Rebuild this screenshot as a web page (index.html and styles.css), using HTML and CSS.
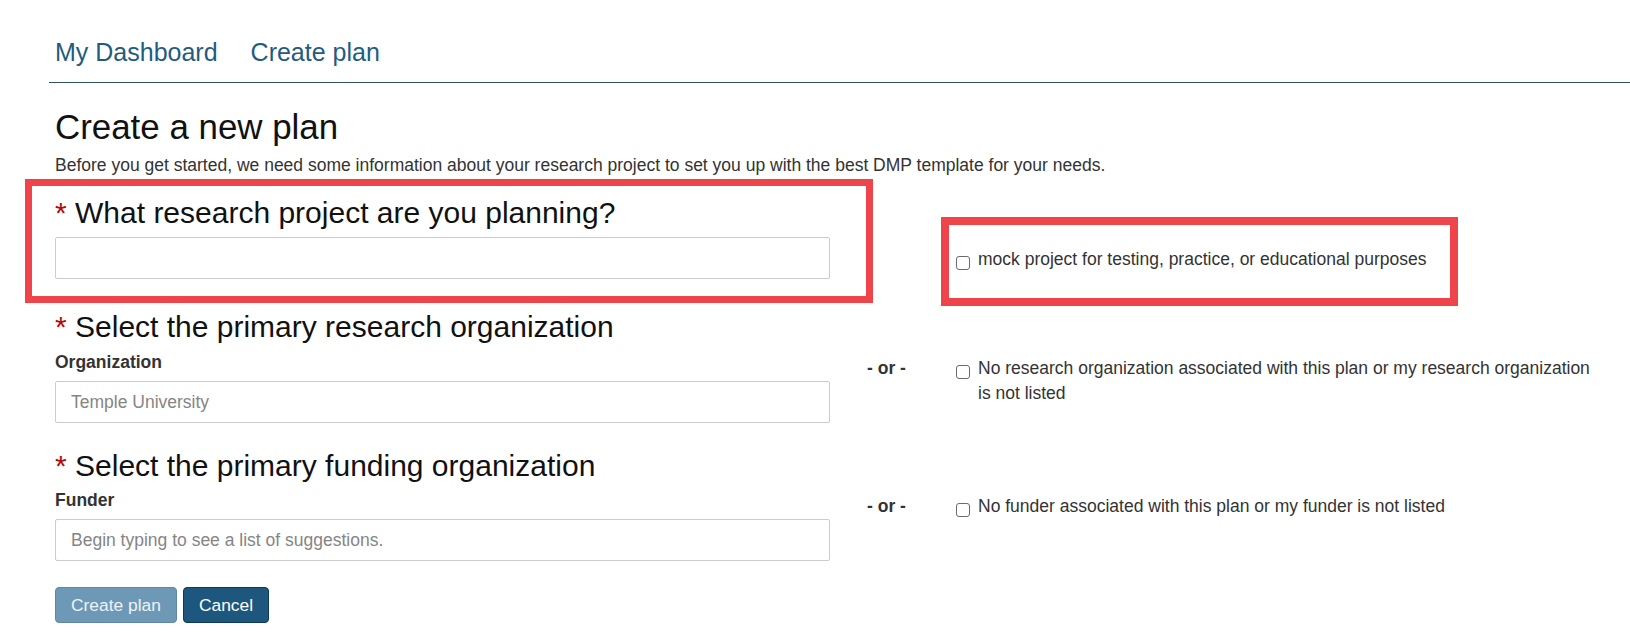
FILE: index.html
```html
<!DOCTYPE html>
<html lang="en">
<head>
<meta charset="utf-8">
<title>Create a new plan</title>
<link rel="stylesheet" href="styles.css">
</head>
<body>
<nav class="topnav">
  <a class="topnav-link" href="#">My Dashboard</a>
  <a class="topnav-link" href="#">Create plan</a>
</nav>
<main class="page">
  <h1 class="page-title">Create a new plan</h1>
  <p class="intro">Before you get started, we need some information about your research project to set you up with the best DMP template for your needs.</p>
  <form class="plan-form">
    <div class="row row-project">
      <div class="col-main">
        <h2 class="question"><span class="req">*</span> What research project are you planning?</h2>
        <input class="field" type="text">
      </div>
      <div class="col-or"></div>
      <label class="col-check check-mock"><input class="box" type="checkbox"><span>mock project for testing, practice, or educational purposes</span></label>
    </div>
    <div class="row row-org">
      <div class="col-main">
        <h2 class="question"><span class="req">*</span> Select the primary research organization</h2>
        <div class="field-label">Organization</div>
        <input class="field" type="text" placeholder="Temple University">
      </div>
      <div class="col-or">- or -</div>
      <label class="col-check"><input class="box" type="checkbox"><span>No research organization associated with this plan or my research organization is not listed</span></label>
    </div>
    <div class="row row-funder">
      <div class="col-main">
        <h2 class="question"><span class="req">*</span> Select the primary funding organization</h2>
        <div class="field-label">Funder</div>
        <input class="field" type="text" placeholder="Begin typing to see a list of suggestions.">
      </div>
      <div class="col-or">- or -</div>
      <label class="col-check"><input class="box" type="checkbox"><span>No funder associated with this plan or my funder is not listed</span></label>
    </div>
    <div class="actions">
      <button class="btn btn-create" type="button">Create plan</button>
      <button class="btn btn-cancel" type="button">Cancel</button>
    </div>
  </form>
</main>
<div class="annot annot-project"></div>
<div class="annot annot-mock"></div>
</body>
</html>
```

FILE: styles.css
```css
html, body {
  margin: 0;
  padding: 0;
  background: #ffffff;
}
body {
  position: relative;
  font-family: "Liberation Sans", Arial, sans-serif;
  color: #333333;
  width: 1630px;
  height: 641px;
  overflow: hidden;
}

.topnav {
  display: flex;
  gap: 33px;
  margin-left: 49px;
  padding: 37px 0 15px 6px;
  border-bottom: 1px solid #2e5566;
}
.topnav-link {
  font-size: 25px;
  line-height: 30px;
  color: #1f5c80;
  text-decoration: none;
}

.page {
  padding: 0 30px 0 55px;
}
.page-title {
  margin: 26px 0 0;
  font-size: 34.9px;
  line-height: 36px;
  font-weight: normal;
  color: #111111;
}
.intro {
  margin: 10px 0 0;
  font-size: 17.5px;
  line-height: 20px;
  color: #333333;
}

.row {
  display: grid;
  grid-template-columns: 775px 126px 644px;
}
.row-project { margin-top: 22px; }
.row-org { margin-top: 32px; }
.row-funder { margin-top: 27px; }

.question {
  margin: 0;
  font-size: 30px;
  line-height: 32px;
  font-weight: normal;
  color: #111111;
}
.req {
  color: #b00c0c;
}
.field-label {
  margin-top: 7px;
  font-size: 17.5px;
  line-height: 22px;
  font-weight: bold;
  color: #333333;
}
.row-org .field-label { margin-top: 8px; }
.field {
  display: block;
  box-sizing: border-box;
  width: 775px;
  height: 42px;
  margin: 8px 0 0;
  padding: 0 15px;
  border: 1px solid #cccccc;
  border-radius: 2px;
  font-family: "Liberation Sans", Arial, sans-serif;
  font-size: 17.5px;
  color: #333333;
  background: #ffffff;
}
.field::placeholder {
  color: #858585;
}

.col-or {
  padding: 45px 0 0 37px;
  font-size: 17.5px;
  line-height: 24.5px;
  font-weight: bold;
  color: #333333;
}
.row-funder .col-or { padding-top: 44px; }

.col-check {
  display: flex;
  align-items: flex-start;
  gap: 8px;
  padding-top: 45px;
  font-size: 17.5px;
  line-height: 24.5px;
  color: #333333;
}
.check-mock { padding-top: 50px; }
.row-funder .col-check { padding-top: 44px; }
.box {
  appearance: none;
  -webkit-appearance: none;
  flex: none;
  box-sizing: border-box;
  width: 14px;
  height: 14px;
  margin: 9px 0 0;
  border: 1px solid #6b6b6b;
  border-radius: 3px;
  background: #ffffff;
}

.actions {
  display: flex;
  gap: 6px;
  margin-top: 26px;
}
.btn {
  box-sizing: border-box;
  height: 36px;
  padding: 5px 15px;
  border-radius: 4px;
  font-family: "Liberation Sans", Arial, sans-serif;
  font-size: 17.4px;
  line-height: 24px;
  color: #ffffff;
}
.btn-create {
  background: #6d99b7;
  border: 1px solid #5c88a6;
  color: #eef3f7;
}
.btn-cancel {
  background: #1d577e;
  border: 1px solid #0f3a57;
}

.annot {
  position: absolute;
  box-sizing: border-box;
  border: 7px solid #f0444b;
  pointer-events: none;
}
.annot-project {
  left: 25px;
  top: 179px;
  width: 848px;
  height: 124px;
}
.annot-mock {
  left: 941px;
  top: 217px;
  width: 517px;
  height: 89px;
  border-width: 8px;
}
```
